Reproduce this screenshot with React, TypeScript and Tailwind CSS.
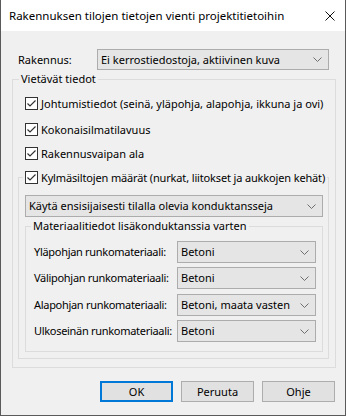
import React from "react";

const font = { fontFamily: "'Segoe UI', 'Noto Sans', sans-serif" };

function Chevron() {
  return (
    <svg width="9" height="5" viewBox="0 0 9 5" className="shrink-0">
      <path d="M0.5 0.5 L4.5 4.5 L8.5 0.5" fill="none" stroke="#6f6f6f" strokeWidth="1" />
    </svg>
  );
}

function Combo({ value, className }: { value: string; className: string }) {
  return (
    <div
      className={`flex items-center justify-between border border-[#acacac] bg-[#e5e5e5] pl-[3px] pr-[6px] ${className}`}
    >
      <span className="whitespace-nowrap">{value}</span>
      <Chevron />
    </div>
  );
}

function Check({ label, tight }: { label: string; tight?: boolean }) {
  return (
    <div className="flex h-[13px] items-center">
      <div className="flex h-[13px] w-[13px] shrink-0 items-center justify-center border border-[#333333] bg-white">
        <svg width="11" height="11" viewBox="0 0 11 11">
          <path d="M1.5 5.5 L4 8 L9.5 2.5" fill="none" stroke="#333333" strokeWidth="1.2" />
        </svg>
      </div>
      <span className={`ml-[3px] whitespace-nowrap ${tight ? "tracking-[-0.15px]" : ""}`}>{label}</span>
    </div>
  );
}

function MaterialRow({ label, value, className }: { label: string; value: string; className: string }) {
  return (
    <div className={`flex h-[22px] items-center pl-[8px] pr-[6px] ${className}`}>
      <span className="whitespace-nowrap tracking-[-0.3px]">{label}</span>
      <Combo value={value} className="ml-auto h-[22px] w-[139px]" />
    </div>
  );
}

export default function App() {
  return (
    <div
      className="flex h-[416px] w-[346px] flex-col border-x border-b border-[#5a5a5a] text-[11px] leading-[16px] text-black"
      style={font}
    >
      {/* title bar */}
      <div className="flex h-[31px] items-center justify-between bg-white pl-[8px] pr-[8px]">
        <span className="whitespace-nowrap text-[11.5px]">Rakennuksen tilojen tietojen vienti projektitietoihin</span>
        <svg width="10" height="10" viewBox="0 0 10 10" className="mr-[2px]">
          <path d="M0.5 0.5 L9.5 9.5 M9.5 0.5 L0.5 9.5" stroke="#111111" strokeWidth="1" />
        </svg>
      </div>

      <div className="flex flex-1 flex-col bg-[#f0f0f0] pl-[11px] pr-[9px] pt-[18px]">
        <div className="flex h-[21px] items-center pl-[6px] pr-[7px]">
          <span>Rakennus:</span>
          <Combo value="Ei kerrostiedostoja, aktiivinen kuva" className="ml-auto h-[21px] w-[232px]" />
        </div>

        <fieldset className="mt-[1px] min-w-0 border border-[#dcdcdc] pl-[6px] pb-[8px]">
          <legend className="px-[2px]">Vietävät tiedot</legend>
          <div className="pl-[6px]">
            <div className="mt-[10px]">
              <Check label="Johtumistiedot (seinä, yläpohja, alapohja, ikkuna ja ovi)" />
            </div>
            <div className="mt-[13px]">
              <Check label="Kokonaisilmatilavuus" />
            </div>
            <div className="mt-[11px]">
              <Check label="Rakennusvaipan ala" />
            </div>
          </div>

          <fieldset className="mr-[6px] mt-[11px] -ml-[1px] min-w-0 border border-[#dcdcdc] pl-[4px] pb-[6px]">
            <legend className="px-[2px]">
              <Check tight label="Kylmäsiltojen määrät (nurkat, liitokset ja aukkojen kehät)" />
            </legend>
            <div className="ml-[2px] mr-[5px]">
              <Combo value="Käytä ensisijaisesti tilalla olevia konduktansseja" className="mt-[11px] h-[22px] w-full" />

              <fieldset className="mt-[1px] min-w-0 border border-[#dcdcdc] pl-[5px] pb-[9px]">
                <legend className="px-[2px]">Materiaalitiedot lisäkonduktanssia varten</legend>
                <div className="-ml-[5px]">
                  <MaterialRow className="mt-[7px]" label="Yläpohjan runkomateriaali:" value="Betoni" />
                  <MaterialRow className="mt-[4px]" label="Välipohjan runkomateriaali:" value="Betoni" />
                  <MaterialRow className="mt-[5px]" label="Alapohjan runkomateriaali:" value="Betoni, maata vasten" />
                  <MaterialRow className="mt-[4px]" label="Ulkoseinän runkomateriaali:" value="Betoni" />
                </div>
              </fieldset>
            </div>
          </fieldset>
        </fieldset>

        <div className="mt-[13px] flex justify-end gap-[8px] pr-[1px]">
          <button className="h-[21px] w-[73px] border-2 border-[#0078d7] bg-[#e1e1e1]">OK</button>
          <button className="h-[21px] w-[73px] border border-[#adadad] bg-[#e1e1e1]">Peruuta</button>
          <button className="h-[21px] w-[73px] border border-[#adadad] bg-[#e1e1e1]">Ohje</button>
        </div>
      </div>
    </div>
  );
}
